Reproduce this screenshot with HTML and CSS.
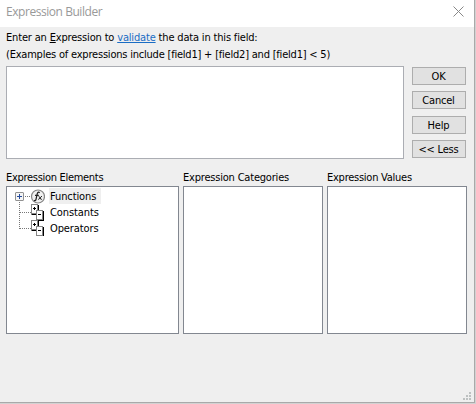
FILE: index.html
```html
<!DOCTYPE html>
<html lang="en">
<head>
<meta charset="utf-8">
<title>Expression Builder</title>
<link rel="stylesheet" href="styles.css">
</head>
<body>
<div class="window">
  <header class="titlebar">
    <span class="title">Expression Builder</span>
    <svg class="close" width="11" height="11" viewBox="0 0 11 11"><path d="M.5.5l10 10M10.5.5l-10 10"/></svg>
  </header>
  <main class="content">
    <p class="prompt">Enter an <u>E</u>xpression to <a href="#">validate</a> the data in this field:</p>
    <p class="example">(Examples of expressions include [field1] + [field2] and [field1] &lt; 5)</p>
    <div class="editor">
      <div class="expression"></div>
      <div class="actions">
        <button>OK</button>
        <button>Cancel</button>
        <button class="help">Help</button>
        <button class="less">&lt;&lt; Less</button>
      </div>
    </div>
    <div class="panels">
      <section>
        <h2 class="elements">Expression Elements</h2>
        <div class="list tree">
          <svg class="icons" width="38" height="48" viewBox="0 0 38 48">
            <path class="dots" d="M18 8.5h6M12.5 14v27M13 24.5h11M13 40.5h11"/>
            <rect class="expander" x="8.5" y="4.5" width="8" height="8" rx=".5"/>
            <path class="plus" d="M10 8.5h5M12.5 6v5"/>
            <circle class="ring" cx="31" cy="8.5" r="6.5"/>
            <path class="fx" d="M32.7 4.7c-1.3-1-2.2-.3-2.5 1.2L29.1 11c-.3 1.5-1 2-2.1 1.4M28 7.3h3.8"/>
            <path class="fx-small" d="M31.6 8.4c1.6-.3 1.3 3.6 3.2 3M35 8.3c-1.3-.2-2.3 3.3-3.8 3.1"/>
            <g id="blocks">
              <path class="shadow" d="M24.5 26.5h6.5M31.5 17v10"/>
              <rect class="block" x="24.5" y="16.5" width="6" height="9"/>
              <path class="mark" d="M26 20.5h3M27.5 19v3"/>
              <path class="shadow" d="M30 32.5h7M36.5 23v10"/>
              <rect class="block" x="29.5" y="22.5" width="6" height="9"/>
              <path class="mark" d="M31 26.5h3"/>
            </g>
            <use href="#blocks" y="16"/>
          </svg>
          <ul>
            <li class="selected">Functions</li>
            <li>Constants</li>
            <li>Operators</li>
          </ul>
        </div>
      </section>
      <section>
        <h2 class="categories">Expression Categories</h2>
        <div class="list"></div>
      </section>
      <section>
        <h2 class="values">Expression Values</h2>
        <div class="list"></div>
      </section>
    </div>
    <svg class="grip" width="8" height="8" viewBox="0 0 8 8"><path d="M6 0h2v2H6zM3 3h2v2H3zM6 3h2v2H6zM0 6h2v2H0zM3 6h2v2H3zM6 6h2v2H6z"/></svg>
  </main>
</div>
</body>
</html>
```
FILE: styles.css
```css
* { box-sizing: border-box; }
body {
  margin: 0;
  width: 476px;
  height: 404px;
  overflow: hidden;
  background: #d2d2d2;
  color: #000;
  font: 11px/16px "DejaVu Sans Condensed", "DejaVu Sans", sans-serif;
  font-stretch: condensed;
  white-space: nowrap;
}
.window {
  display: flex;
  flex-direction: column;
  width: 475px;
  height: 403px;
  border: solid #a9a9a9;
  border-width: 0 1px 1px 0;
  background: #efefef;
}
.titlebar {
  display: flex;
  justify-content: space-between;
  height: 27px;
  padding: 0 10px 0 6px;
  background: #fff;
}
.title {
  font: 12px/24px "Open Sans", sans-serif;
  letter-spacing: -.45px;
  color: #999;
}
.close { margin-top: 6px; fill: none; stroke: #888; }
.content { position: relative; flex: 1; padding: 3px 7px 0 6px; }
p { margin: 0; letter-spacing: -.2px; }
.prompt { height: 17px; letter-spacing: -.17px; }
.example { height: 19px; letter-spacing: -.21px; }
a { color: #1a6dc4; }
u, a { text-decoration-thickness: 1px; text-underline-offset: 1px; }
.editor { display: flex; gap: 8px; height: 93px; }
.expression { width: 398px; border: 1px solid #abadb3; background: #fff; }
.actions { display: flex; flex-direction: column; gap: 6px; padding-top: 1px; }
button {
  width: 54px;
  height: 18px;
  padding: 1px 1px 0 0;
  border: 1px solid #adadad;
  background: #e1e1e1;
  color: #000;
  font: inherit;
  line-height: 16px;
  letter-spacing: -.2px;
}
.help { margin-top: 1px; }
.panels { display: grid; grid-template-columns: 173px 140px 140px; gap: 4px; margin-top: 10px; }
h2 { margin: 0; height: 17px; padding-top: 1px; font: inherit; letter-spacing: -.2px; }
.elements { letter-spacing: -.3px; }
.values { letter-spacing: -.25px; }
.list { height: 148px; border: 1px solid #828790; background: #fff; }
.tree { display: flex; gap: 4px; padding-top: 1px; }
.icons { flex: none; fill: none; }
.dots { stroke: #777; stroke-dasharray: 1 1; }
.expander { fill: #f5f5f5; stroke: #919191; }
.plus { stroke: #244a9b; }
.ring { fill: #f0f0f0; stroke: #858585; stroke-width: 1.2; }
.fx { stroke: #222; stroke-width: 1.2; }
.fx-small { stroke: #222; }
.block { fill: #fff; stroke: #858585; }
.shadow, .mark { stroke: #000; }
ul { margin: 0; padding: 0; list-style: none; }
li { height: 16px; padding: 1px 2px 0 1px; letter-spacing: -.1px; }
.selected { background: #efefef; }
.grip { position: absolute; right: 3px; bottom: 2px; fill: #bdc1c1; }
```
